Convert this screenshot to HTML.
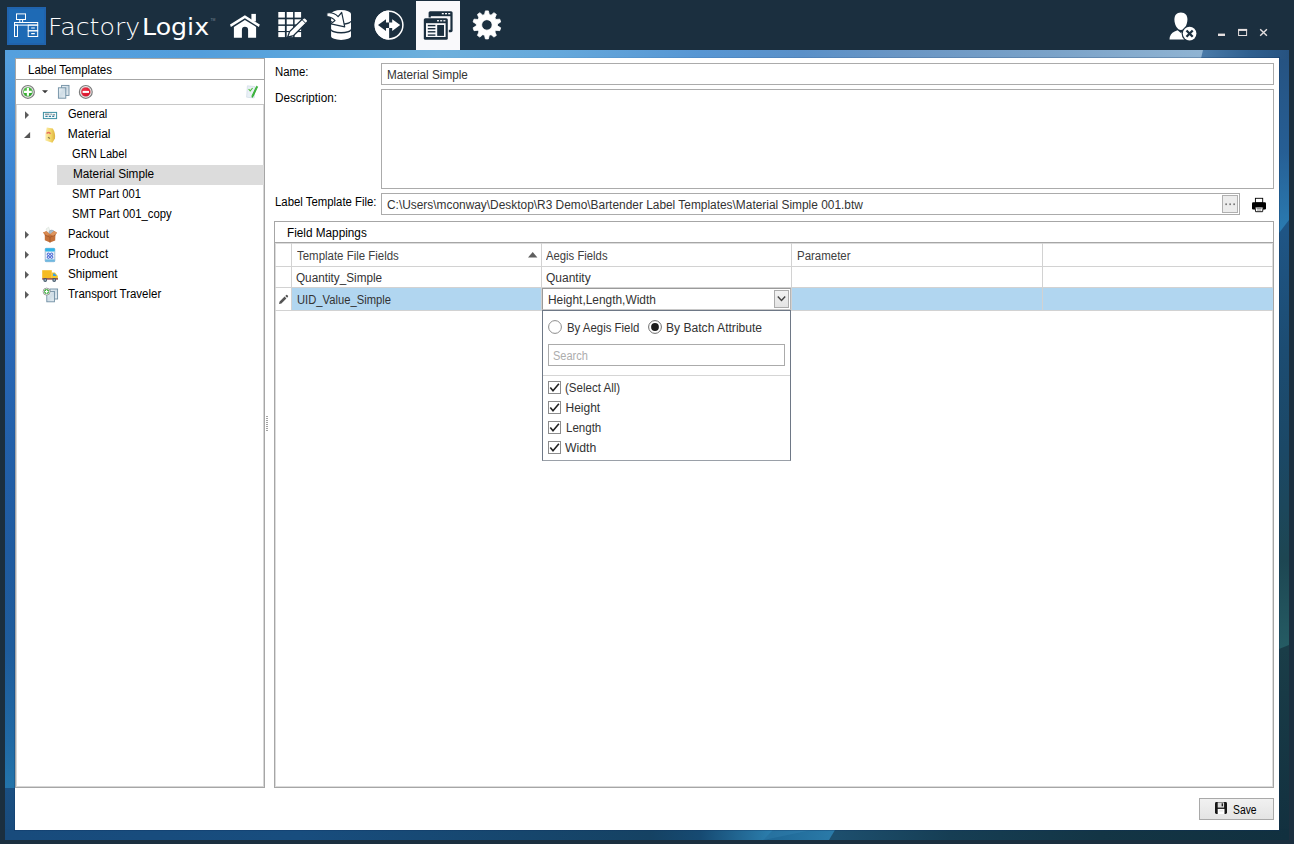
<!DOCTYPE html>
<html lang="en">
<head>
<meta charset="utf-8">
<title>FactoryLogix - Label Templates</title>
<style>
*{box-sizing:border-box;margin:0;padding:0}
html,body{width:1295px;height:844px;overflow:hidden;background:#1b2f3f}
body{position:relative;font-family:"Liberation Sans",sans-serif;font-size:12px;color:#000}
.abs{position:absolute}
#win{position:absolute;left:0;top:0;width:1295px;height:844px;background:#1b2f3f;overflow:hidden}
#edgecol{position:absolute;left:1294px;top:0;width:1px;height:844px;background:#fff}
#panel{position:absolute;left:15px;top:58px;width:1264px;height:772px;background:#fff}
.t{position:absolute;white-space:nowrap;line-height:14px;height:14px}
/* header */
#logo{position:absolute;left:7px;top:7px;width:39px;height:38px;background:#1e6ab5;border:2.5px solid #2063ad}
#tabsel{position:absolute;left:416px;top:1px;width:44px;height:49px;background:#f9f9fb}
.ln{position:absolute;background:#a6a6a6}
.box{position:absolute;border:1px solid #ababab;background:#fff}
.g{background:#d2d2d2}
.h{color:#404040}
.c{color:#333}
</style>
</head>
<body>
<div id="win">
  <svg id="bg" class="abs" style="left:5px;top:50px" width="1284" height="790" viewBox="5 50 1284 790">
    <defs>
      <linearGradient id="bT" gradientUnits="userSpaceOnUse" x1="5" y1="0" x2="1289" y2="0"><stop offset="0.0000" stop-color="#55a0de"/><stop offset="0.1519" stop-color="#539edc"/><stop offset="0.2531" stop-color="#5ea8dc"/><stop offset="0.3388" stop-color="#6eb0dc"/><stop offset="0.4322" stop-color="#65a8db"/><stop offset="0.5413" stop-color="#5796d3"/><stop offset="0.6192" stop-color="#5a90c8"/><stop offset="0.6970" stop-color="#6a96c4"/><stop offset="0.8139" stop-color="#7aa2c8"/><stop offset="0.9330" stop-color="#90b4d3"/><stop offset="0.9330" stop-color="#4a7aa8"/><stop offset="0.9696" stop-color="#2f5f8e"/><stop offset="1.0000" stop-color="#265280"/></linearGradient>
      <linearGradient id="bL" gradientUnits="userSpaceOnUse" x1="0" y1="50" x2="0" y2="840"><stop offset="0.0000" stop-color="#57a2e0"/><stop offset="0.1266" stop-color="#3f8ad6"/><stop offset="0.2532" stop-color="#2f74c6"/><stop offset="0.3797" stop-color="#2867b6"/><stop offset="0.4937" stop-color="#2260aa"/><stop offset="0.6329" stop-color="#1f5ba0"/><stop offset="0.7595" stop-color="#1e5c9c"/><stop offset="0.8734" stop-color="#2069a4"/><stop offset="0.9342" stop-color="#2374aa"/><stop offset="0.9342" stop-color="#1a4f82"/><stop offset="1.0000" stop-color="#184b7c"/></linearGradient>
      <linearGradient id="bR" gradientUnits="userSpaceOnUse" x1="0" y1="50" x2="0" y2="840"><stop offset="0.0000" stop-color="#265280"/><stop offset="0.1266" stop-color="#265e94"/><stop offset="0.2316" stop-color="#2a7cb2"/><stop offset="0.2316" stop-color="#1f5585"/><stop offset="0.3797" stop-color="#1c4c72"/><stop offset="0.5063" stop-color="#1b4866"/><stop offset="0.6456" stop-color="#1d4652"/><stop offset="0.7582" stop-color="#255c64"/><stop offset="0.7582" stop-color="#1a3d48"/><stop offset="1.0000" stop-color="#12303f"/></linearGradient>
      <linearGradient id="bB" gradientUnits="userSpaceOnUse" x1="5" y1="0" x2="1289" y2="0"><stop offset="0.0000" stop-color="#184b7c"/><stop offset="0.2298" stop-color="#184d7e"/><stop offset="0.5023" stop-color="#154263"/><stop offset="0.5413" stop-color="#164a72"/><stop offset="0.5981" stop-color="#2c7fae"/><stop offset="0.5981" stop-color="#1f6896"/><stop offset="0.6464" stop-color="#2b7ba9"/><stop offset="0.6464" stop-color="#1d4f6e"/><stop offset="0.7360" stop-color="#163e54"/><stop offset="0.8528" stop-color="#133545"/><stop offset="1.0000" stop-color="#11303f"/></linearGradient>
      <linearGradient id="oT" x1="0" y1="0" x2="1" y2="0"><stop offset="0.3" stop-color="#0c2f5c" stop-opacity="0"/><stop offset="1" stop-color="#0c2f5c" stop-opacity="0.3"/></linearGradient>
      <linearGradient id="oL" x1="0" y1="0" x2="0" y2="1"><stop offset="0.3" stop-color="#0c2f5c" stop-opacity="0"/><stop offset="1" stop-color="#0c2f5c" stop-opacity="0.3"/></linearGradient>
    </defs>
    <rect x="5" y="50" width="1284" height="790" fill="#1f5a9c"/>
    <rect x="5" y="58" width="12" height="774" fill="url(#bL)"/>
    <rect x="1277" y="58" width="12" height="774" fill="url(#bR)"/>
    <rect x="5" y="50" width="1284" height="9" fill="url(#bT)"/>
    <rect x="5" y="829" width="1284" height="11" fill="url(#bB)"/>
    <polygon points="1203,50 1203,59 1200.9,59" fill="#4a7aa8"/>
    <polygon points="1289,220 1289,233 1279,233" fill="#1f5585"/>
    <polygon points="1289,645 1289,649 1279,649" fill="#1a3d48"/>
    <polygon points="773,830 773,840 763.5,840" fill="#1f6896"/>
    <polygon points="773,830 812,830 763.5,840" fill="#3a8cb8" opacity="0.3"/>
    <polygon points="835,830 835,840 829,840" fill="#1d4f6e"/>
    <rect x="14" y="57" width="1266" height="1" fill="url(#oT)"/>
    <rect x="14" y="57" width="1" height="774" fill="url(#oL)"/>
    <rect x="1279" y="57" width="1" height="774" fill="#0c2f5c" fill-opacity="0.3"/>
    <rect x="14" y="830" width="1266" height="1" fill="#0c2f5c" fill-opacity="0.3"/>
  </svg>
  <div id="panel"></div>
  <div id="edgecol"></div>

  <!-- HEADER -->
  <div id="logo"></div>
  <div id="tabsel"></div>
  <div id="brand" class="abs" style="left:48px;top:10px;height:34px;line-height:34px;font-size:23.5px;color:#fff;white-space:nowrap;transform:scaleX(1.075);transform-origin:0 0"><span id="b1" style="font-family:'DejaVu Sans Light','DejaVu Sans',sans-serif;font-weight:200">Factory</span><span id="b2" style="font-family:'DejaVu Sans',sans-serif;font-weight:400;margin-left:1.6px">Logix</span></div>
  <div class="abs" style="left:210.5px;top:16.5px;font-size:3.4px;line-height:6px;color:#7d8a94;font-family:'Liberation Sans',sans-serif">TM</div>
  <svg id="hdr" class="abs" style="left:0;top:0" width="1295" height="50" viewBox="0 0 1295 50">
    <!-- desk logo -->
    <g fill="none" stroke="#fff" stroke-width="1">
      <rect x="16.5" y="13.9" width="9" height="5.6"/>
      <path d="M19.8 19.5 V22 M22.6 19.5 V22"/>
      <rect x="14.5" y="22.5" width="23.2" height="2.6"/>
      <rect x="14.5" y="25.1" width="3" height="11.4"/>
      <rect x="28.2" y="25.1" width="9.5" height="5.7"/>
      <rect x="28.2" y="30.8" width="9.5" height="5.7"/>
      <path d="M31.2 28 H34.8 M31.2 33.7 H34.8" stroke-width="1.2"/>
    </g>
    <!-- home -->
    <g fill="#fff">
      <path d="M244.9 15.2 L230 24.6 L230.9 27 L244.9 18.3 L258.9 27 L259.8 24.6 Z"/>
      <rect x="251.4" y="13.9" width="4.5" height="7.5"/>
      <path d="M244.9 20 L233.9 26.9 V37.8 H241.9 V30 Q241.9 26.8 244.9 26.8 Q248.1 26.8 248.1 30 V37.8 H256.1 V26.9 Z"/>
    </g>
    <!-- grid + pencil -->
    <g fill="#fff">
      <rect x="278.3" y="12" width="6.6" height="5.6"/><rect x="286.7" y="12" width="6.4" height="5.6"/><rect x="294.6" y="12" width="6.5" height="5.6"/>
      <rect x="278.3" y="19.3" width="6.6" height="5.1"/><rect x="286.7" y="19.3" width="6.4" height="5.1"/><rect x="294.6" y="19.3" width="6.5" height="5.1"/>
      <rect x="278.3" y="25.9" width="6.6" height="5.1"/><rect x="286.7" y="25.9" width="6.4" height="5.1"/><rect x="294.6" y="25.9" width="6.5" height="5.1"/>
      <rect x="278.3" y="32.1" width="6.6" height="5"/><rect x="286.7" y="32.1" width="6.4" height="5"/><rect x="294.6" y="32.1" width="6.5" height="5"/>
    </g>
    <path d="M287.6 37.2 L289.6 31.6 L303.2 18.2 Q304.4 17.2 305.6 18.3 L307.2 19.9 Q308.2 21.1 307.1 22.2 L293.4 35.6 Z" fill="#fff" stroke="#1b2f3f" stroke-width="1.3"/>
    <path d="M302 19.6 L305.8 23.4" stroke="#1b2f3f" stroke-width="1" fill="none"/>
    <!-- database -->
    <g fill="#fff">
      <path d="M331.1 13.6 A9.95 3.5 0 0 1 351 13.6 V20.2 A9.95 3.1 0 0 1 331.1 20.2 Z"/>
      <path d="M331.1 21.7 A9.95 3.1 0 0 0 351 21.7 V28.8 A9.95 3.1 0 0 1 331.1 28.8 Z"/>
      <path d="M331.1 30.4 A9.95 3.1 0 0 0 351 30.4 V36.4 A9.95 3.5 0 0 1 331.1 36.4 Z"/>
    </g>
    <path d="M326.8 13 Q333.6 11.8 338.1 16.7 L341.7 12.5 L344.7 26.9 L330.9 23.9 L335 20.5 Q332.6 17.4 326.9 16.6 Z" fill="#fff" stroke="#1b2f3f" stroke-width="1.2" stroke-linejoin="round"/>
    <!-- arrows circle -->
    <circle cx="389.1" cy="25.1" r="13.8" fill="none" stroke="#fff" stroke-width="1.5"/>
    <path d="M389.1 10.6 A14.5 14.5 0 0 0 389.1 39.6 Z" fill="#fff"/>
    <path d="M378 25.1 L386 19.3 V22.4 H389.1 V27.9 H386 V30.9 Z" fill="#1b2f3f"/>
    <path d="M400.2 25.1 L392.2 19.3 V22.4 H389.1 V27.9 H392.2 V30.9 Z" fill="#fff"/>
    <!-- windows (selected) -->
    <g>
      <rect x="428.6" y="11.2" width="24" height="21" rx="1.6" fill="#1b2f3f"/>
      <rect x="430.8" y="16.2" width="19.6" height="13.6" fill="#f9f9fb"/>
      <rect x="441.8" y="13" width="2" height="1.3" fill="#f9f9fb"/><rect x="445" y="13" width="2" height="1.3" fill="#f9f9fb"/><rect x="448.2" y="13" width="2" height="1.3" fill="#f9f9fb"/>
      <rect x="422.8" y="17.4" width="26" height="23.2" rx="2" fill="#f9f9fb"/>
      <rect x="423.8" y="18.2" width="24" height="21.6" rx="1.6" fill="#1b2f3f"/>
      <rect x="426" y="23.2" width="19.6" height="13.8" fill="#f9f9fb"/>
      <rect x="437" y="20.1" width="2" height="1.3" fill="#f9f9fb"/><rect x="440.2" y="20.1" width="2" height="1.3" fill="#f9f9fb"/><rect x="443.4" y="20.1" width="2" height="1.3" fill="#f9f9fb"/>
      <rect x="427.8" y="24.9" width="7.6" height="1.4" fill="#1b2f3f"/><rect x="427.8" y="28" width="7.6" height="1.4" fill="#1b2f3f"/><rect x="427.8" y="31.1" width="7.6" height="1.4" fill="#1b2f3f"/><rect x="427.8" y="34.4" width="7.6" height="1.4" fill="#1b2f3f"/>
      <rect x="437.2" y="25" width="6.8" height="10.9" fill="#1b2f3f"/>
    </g>
    <!-- gear -->
    <path d="M484.54 14.57 L485.42 10.88 L488.38 10.88 L489.26 14.57 L491.06 15.15 L493.95 12.69 L496.34 14.42 L494.89 17.93 L496.00 19.46 L499.78 19.16 L500.69 21.97 L497.46 23.96 L497.46 25.84 L500.69 27.83 L499.78 30.64 L496.00 30.34 L494.89 31.87 L496.34 35.38 L493.95 37.11 L491.06 34.65 L489.26 35.23 L488.38 38.92 L485.42 38.92 L484.54 35.23 L482.74 34.65 L479.85 37.11 L477.46 35.38 L478.91 31.87 L477.80 30.34 L474.02 30.64 L473.11 27.83 L476.34 25.84 L476.34 23.96 L473.11 21.97 L474.02 19.16 L477.80 19.46 L478.91 17.93 L477.46 14.42 L479.85 12.69 L482.74 15.15 Z M481.65 24.90 a5.25 5.25 0 1 0 10.50 0 a5.25 5.25 0 1 0 -10.50 0 Z" fill="#fff" fill-rule="evenodd" stroke="#fff" stroke-width="0.8" stroke-linejoin="round"/>
    <!-- user -->
    <path d="M1169.5 39.6 Q1169.8 33.4 1174.6 31.6 L1177.6 30.2 L1180.9 33 L1184.2 30.2 L1187.2 31.6 Q1190 33 1190 39.6 Z" fill="#fff"/>
    <path d="M1180.9 12.4 C1185.4 12.4 1187.4 15.6 1187.4 19.4 C1187.4 24.6 1184.4 30 1180.9 30 C1177.4 30 1174.4 24.6 1174.4 19.4 C1174.4 15.6 1176.4 12.4 1180.9 12.4 Z" fill="#fff"/>
    <circle cx="1189.6" cy="33.6" r="8" fill="#1b2f3f"/>
    <circle cx="1189.6" cy="33.6" r="6.8" fill="#fff"/>
    <path d="M1186.5 30.5 L1192.7 36.7 M1192.7 30.5 L1186.5 36.7" stroke="#1b2f3f" stroke-width="2.3" fill="none"/>
    <!-- window controls -->
    <rect x="1218" y="33.6" width="7" height="2.4" fill="#e6e0e0"/>
    <rect x="1238.6" y="29.9" width="8" height="5.6" fill="none" stroke="#e6e0e0" stroke-width="1"/>
    <rect x="1238.1" y="28.9" width="9" height="2" fill="#e6e0e0"/>
    <path d="M1260.2 29.3 L1266.9 35.8 M1266.9 29.3 L1260.2 35.8" stroke="#e6e0e0" stroke-width="1.4" fill="none"/>
  </svg>

  <!-- LEFT PANEL -->
  <div id="left" class="abs" style="left:15px;top:58px;width:250px;height:730px;border:1px solid #a6a6a6;background:#fff"></div>
  <div class="ln" style="left:16px;top:79px;width:248px;height:1px"></div>
  <div class="ln" style="left:16px;top:104px;width:248px;height:1px;background:#c8c8c8"></div>
  <div class="ln" style="left:16px;top:105px;width:1px;height:682px;background:#d6d6d6"></div>
  <div class="ln" style="left:263px;top:105px;width:1px;height:682px;background:#d6d6d6"></div>
  <div class="ln" style="left:16px;top:786px;width:248px;height:1px;background:#d6d6d6"></div>
  <div class="t" id="lt" style="left:27.6px;top:63px;transform:scaleX(0.9644);transform-origin:0 0">Label Templates</div>

  <div class="abs" style="left:57px;top:165px;width:207px;height:20px;background:#dcdcdc"></div>
  <div class="t tr" style="left:68.4px;top:107px;transform:scaleX(0.9209);transform-origin:0 0">General</div>
  <div class="t tr" style="left:67.8px;top:127px;transform:scaleX(1.0000);transform-origin:0 0">Material</div>
  <div class="t tr" style="left:72px;top:147px;transform:scaleX(0.9256);transform-origin:0 0">GRN Label</div>
  <div class="t tr" style="left:72.5px;top:167px;transform:scaleX(0.9807);transform-origin:0 0">Material Simple</div>
  <div class="t tr" style="left:72.3px;top:187px;transform:scaleX(0.9338);transform-origin:0 0">SMT Part 001</div>
  <div class="t tr" style="left:72.3px;top:207px;transform:scaleX(0.9421);transform-origin:0 0">SMT Part 001_copy</div>
  <div class="t tr" style="left:67.8px;top:227px;transform:scaleX(0.9405);transform-origin:0 0">Packout</div>
  <div class="t tr" style="left:67.8px;top:247px;transform:scaleX(0.9714);transform-origin:0 0">Product</div>
  <div class="t tr" style="left:68px;top:267px;transform:scaleX(0.9766);transform-origin:0 0">Shipment</div>
  <div class="t tr" style="left:68px;top:287px;transform:scaleX(0.9551);transform-origin:0 0">Transport Traveler</div>

  <svg id="lefticons" class="abs" style="left:0;top:80px" width="265" height="230" viewBox="0 80 265 230">
    <defs>
      <radialGradient id="gG" cx="0.4" cy="0.35" r="0.7"><stop offset="0" stop-color="#5ccf4c"/><stop offset="1" stop-color="#1d9a1d"/></radialGradient>
      <radialGradient id="gR" cx="0.4" cy="0.35" r="0.7"><stop offset="0" stop-color="#f4364a"/><stop offset="1" stop-color="#d20a24"/></radialGradient>
      <linearGradient id="gP" x1="0" y1="0" x2="1" y2="1"><stop offset="0" stop-color="#eef4f8"/><stop offset="0.5" stop-color="#cfdde6"/><stop offset="1" stop-color="#e6eef3"/></linearGradient>
      <linearGradient id="gB" x1="0" y1="0" x2="1" y2="0"><stop offset="0" stop-color="#faecae"/><stop offset="0.55" stop-color="#f4d869"/><stop offset="1" stop-color="#dcb03c"/></linearGradient>
    </defs>
    <!-- add -->
    <circle cx="27.9" cy="91.9" r="6.4" fill="#f4f4f4" stroke="#7c7c7c" stroke-width="1.2"/>
    <circle cx="27.9" cy="91.9" r="4.7" fill="url(#gG)" stroke="#9ab89a" stroke-width="0.5"/>
    <path d="M27.9 88 V95.8 M24 91.9 H31.8" stroke="#fff" stroke-width="2.1"/>
    <path d="M42 90.2 H48 L45 93.2 Z" fill="#3a3a3a"/>
    <!-- copy -->
    <rect x="61.6" y="85.4" width="7.4" height="10" fill="url(#gP)" stroke="#6f8ea3" stroke-width="0.9"/>
    <rect x="58.4" y="87.8" width="7.4" height="10.4" fill="url(#gP)" stroke="#6f8ea3" stroke-width="0.9"/>
    <!-- delete -->
    <circle cx="85.8" cy="91.9" r="6.4" fill="#f4f4f4" stroke="#7c7c7c" stroke-width="1.2"/>
    <circle cx="85.8" cy="91.9" r="4.7" fill="url(#gR)" stroke="#c09a9a" stroke-width="0.5"/>
    <rect x="82.6" y="90.9" width="6.4" height="2" fill="#fff"/>
    <!-- edit (note + pencil) -->
    <path d="M247.4 85.8 L255 86.6 L254.2 98 L246.6 97.2 Z" fill="#e9f0f6" stroke="#c9d6e2" stroke-width="0.6"/>
    <path d="M248.6 89 L250.2 90.8 L252.6 88" stroke="#4fbf3a" stroke-width="1.1" fill="none"/>
    <path d="M256.6 86.2 L257.6 86.8 L253.2 96.4 L252 97.4 L252 95.8 Z" fill="#3cc43c" stroke="#2ea42e" stroke-width="0.8"/>
    <!-- arrows -->
    <path d="M25 111.2 V119.0 L29 115.1 Z" fill="#5c5c5c"/>
    <path d="M24 138 H30.1 V132 Z" fill="#555"/>
    <path d="M25 230.9 V238.7 L29 234.8 Z" fill="#5c5c5c"/><path d="M25 250.9 V258.7 L29 254.8 Z" fill="#5c5c5c"/><path d="M25 270.9 V278.7 L29 274.8 Z" fill="#5c5c5c"/><path d="M25 290.9 V298.7 L29 294.8 Z" fill="#5c5c5c"/>
    <!-- general -->
    <rect x="43.4" y="112.4" width="13.2" height="6.2" fill="#f4fafb" stroke="#3d8fa2" stroke-width="1"/>
    <path d="M45 114.2 H49.4 M50.4 114.2 H51.8 M52.6 114.8 H55" stroke="#5a6a72" stroke-width="0.9"/>
    <path d="M45.4 116.4 H47.6 M48.8 116.4 H51 M52.2 116.4 H54.2" stroke="#2f7fa0" stroke-width="1.1"/>
    <!-- material bag -->
    <path d="M46.8 127.4 L52.8 128.6 Q55.6 133 55 138.4 L52.4 142.8 L45.4 140.4 Q44.6 134 46.8 127.4 Z" fill="url(#gB)"/>
    <path d="M46.6 133.4 Q48.6 131.6 50.6 133.8" stroke="#e8705a" stroke-width="1.4" fill="none"/>
    <path d="M48 137.2 L50 138.4" stroke="#8a7a50" stroke-width="1.2"/>
    <!-- packout box -->
    <path d="M46 229 L48.6 227.2 L50.4 231.6 L47.6 232.6 Z" fill="#f1f4f1" stroke="#c7d3c7" stroke-width="0.4"/>
    <ellipse cx="51.6" cy="232.4" rx="2.6" ry="2.3" fill="#a9bccb" stroke="#8399aa" stroke-width="0.5"/>
    <path d="M43 232.6 L46.4 231.2 L50 234.2 L54.2 231 L57 232.8 L55.4 235 L55.2 240.4 L50 242.6 L44.8 240.2 L44.8 235 Z" fill="#c4713a"/>
    <path d="M44.8 235 L50 237.2 L55.4 235 M50 237.2 V242.6" stroke="#9c5526" stroke-width="0.7" fill="none"/>
    <path d="M43 232.6 L46.4 231.2 L50 234.2 L47 235.6 Z" fill="#d88a52"/>
    <path d="M57 232.8 L54.2 231 L50 234.2 L53.2 235.8 Z" fill="#dd9660"/>
    <!-- product -->
    <rect x="45.2" y="248.3" width="9.6" height="13.4" rx="0.8" fill="#e9eef7" stroke="#7fa3c8" stroke-width="0.7"/>
    <rect x="45.2" y="248.3" width="9.6" height="3.2" rx="0.8" fill="#2fb4e6"/>
    <rect x="45.2" y="259.4" width="9.6" height="2.3" fill="#6db8e0"/>
    <g fill="none" stroke="#2a4fd0" stroke-width="0.9"><circle cx="48.4" cy="254.3" r="1.2"/><circle cx="51.6" cy="254.3" r="1.2"/><circle cx="48.4" cy="257.2" r="1.2"/><circle cx="51.6" cy="257.2" r="1.2"/></g>
    <!-- shipment truck -->
    <rect x="42.2" y="270.2" width="9.6" height="8" fill="#f6bb22"/>
    <path d="M51.8 272.6 H55 L57.8 276 V278.6 H51.8 Z" fill="#f3c62c"/>
    <path d="M53 273.6 H54.8 L56.6 276 H53 Z" fill="#3aa0e8"/>
    <rect x="42.2" y="278.2" width="15.8" height="1.4" fill="#8c3a2c"/>
    <circle cx="45.2" cy="280" r="1.9" fill="#44586a"/><circle cx="54.2" cy="280" r="1.9" fill="#44586a"/>
    <circle cx="45.2" cy="280" r="0.8" fill="#c6d2dc"/><circle cx="54.2" cy="280" r="0.8" fill="#c6d2dc"/>
    <!-- transport traveler -->
    <rect x="50" y="289" width="7.6" height="10" fill="url(#gP)" stroke="#6f8ea3" stroke-width="0.9"/>
    <rect x="46.8" y="291.4" width="7.6" height="10.4" fill="url(#gP)" stroke="#6f8ea3" stroke-width="0.9"/>
    <circle cx="46.6" cy="291.6" r="3.5" fill="#fff" stroke="#8a8a8a" stroke-width="0.8"/>
    <circle cx="46.6" cy="291.6" r="2.5" fill="#35a935"/>
    <path d="M46.6 289.8 V293.4 M44.8 291.6 H48.4" stroke="#fff" stroke-width="1.1"/>
  </svg>

  <svg class="abs" style="left:266px;top:416px" width="2" height="16" viewBox="0 0 2 16"><rect x="0" y="0" width="2" height="1" fill="#a2a2a2"/><rect x="0" y="2" width="2" height="1" fill="#a2a2a2"/><rect x="0" y="4" width="2" height="1" fill="#a2a2a2"/><rect x="0" y="6" width="2" height="1" fill="#a2a2a2"/><rect x="0" y="8" width="2" height="1" fill="#a2a2a2"/><rect x="0" y="10" width="2" height="1" fill="#a2a2a2"/><rect x="0" y="12" width="2" height="1" fill="#a2a2a2"/><rect x="0" y="14" width="2" height="1" fill="#a2a2a2"/></svg>
  <!-- RIGHT FORM -->
  <div class="t" style="left:274.9px;top:65px;transform:scaleX(0.9486);transform-origin:0 0">Name:</div>
  <div class="t" style="left:274.9px;top:91px;transform:scaleX(0.9778);transform-origin:0 0">Description:</div>
  <div class="t" style="left:274.6px;top:195px;transform:scaleX(0.9472);transform-origin:0 0">Label Template File:</div>
  <div class="box" style="left:381px;top:63px;width:893px;height:22px"></div>
  <div class="t c" style="left:387.1px;top:68px;transform:scaleX(0.9771);transform-origin:0 0">Material Simple</div>
  <div class="box" style="left:381px;top:89px;width:893px;height:100px"></div>
  <div class="box" style="left:381px;top:193px;width:859px;height:22px"></div>
  <div class="box" style="left:1222px;top:195px;width:16px;height:18px;border-color:#b0b0b0;background:#ececec"></div>
  <svg class="abs" style="left:1225px;top:203px" width="11" height="3" viewBox="0 0 11 3"><rect x="0.3" y="0.4" width="1.7" height="1.7" fill="#7a7a7a"/><rect x="4.3" y="0.4" width="1.7" height="1.7" fill="#7a7a7a"/><rect x="8.3" y="0.4" width="1.7" height="1.7" fill="#7a7a7a"/></svg>
  <svg class="abs" style="left:1251px;top:197px" width="16" height="16" viewBox="1251 197 16 16"><rect x="1255.4" y="198.3" width="7.3" height="4.6" fill="#fff" stroke="#000" stroke-width="0.9"/><path d="M1252 203.4 Q1252 202.2 1253.2 202.2 H1264.8 Q1266 202.2 1266 203.4 V208.6 Q1266 209.4 1265.2 209.4 H1252.8 Q1252 209.4 1252 208.6 Z" fill="#000"/><path d="M1255 207 H1263.2 L1262.6 211.7 H1255.6 Z" fill="#fff" stroke="#000" stroke-width="0.9"/><path d="M1256.6 208.4 H1261.6 M1257 210 H1261.2" stroke="#8a8a8a" stroke-width="1"/></svg>
  <div class="t c" style="left:387.2px;top:198px;transform:scaleX(0.9913);transform-origin:0 0">C:\Users\mconway\Desktop\R3 Demo\Bartender Label Templates\Material Simple 001.btw</div>

  <!-- FIELD MAPPINGS -->
  <div class="box" style="left:274px;top:221px;width:1000px;height:567px;border-color:#a6a6a6"></div>
  <div class="ln" style="left:275px;top:242px;width:998px;height:1px"></div>
  <div class="ln" style="left:275px;top:243px;width:998px;height:1px;background:#dcdcdc"></div>
  <div class="ln" style="left:275px;top:243px;width:1px;height:544px;background:#dcdcdc"></div>
  <div class="ln" style="left:1272px;top:243px;width:1px;height:544px;background:#dcdcdc"></div>
  <div class="ln" style="left:275px;top:786px;width:998px;height:1px;background:#dcdcdc"></div>
  <div class="t" style="left:286.8px;top:226px;transform:scaleX(0.9803);transform-origin:0 0">Field Mappings</div>

  <div class="abs" style="left:292px;top:288px;width:981px;height:22px;background:#b1d6f0"></div>
  <!-- grid lines -->
  <div class="ln g" style="left:275px;top:266px;width:998px;height:1px"></div>
  <div class="ln g" style="left:275px;top:287px;width:998px;height:1px"></div>
  <div class="ln g" style="left:275px;top:310px;width:998px;height:1px"></div>
  <div class="ln g" style="left:291px;top:243px;width:1px;height:67px"></div>
  <div class="ln g" style="left:541px;top:243px;width:1px;height:67px"></div>
  <div class="ln g" style="left:791px;top:243px;width:1px;height:67px"></div>
  <div class="ln g" style="left:1042px;top:243px;width:1px;height:67px"></div>
  <svg class="abs" style="left:528px;top:252px" width="10" height="6" viewBox="0 0 10 6"><path d="M0 5.5 L4.7 0 L9.4 5.5 Z" fill="#5f5f5f"/></svg>
  <svg class="abs" style="left:278px;top:294px" width="11" height="11" viewBox="0 0 11 11"><path d="M1 10 L1.6 7.6 L6.6 2.6 L8.4 4.4 L3.4 9.4 Z M7.3 1.9 L8.2 1 Q8.8 0.6 9.4 1.2 L9.8 1.6 Q10.4 2.2 10 2.8 L9.1 3.7 Z" fill="#555"/></svg>
  <div class="t h" style="left:296.5px;top:249px;transform:scaleX(0.9542);transform-origin:0 0">Template File Fields</div>
  <div class="t h" style="left:546px;top:249px;transform:scaleX(0.9418);transform-origin:0 0">Aegis Fields</div>
  <div class="t h" style="left:796.6px;top:249px;transform:scaleX(0.9554);transform-origin:0 0">Parameter</div>
  <div class="t c" style="left:296px;top:271px;transform:scaleX(0.9773);transform-origin:0 0">Quantity_Simple</div>
  <div class="t c" style="left:546px;top:271px;transform:scaleX(1.0000);transform-origin:0 0">Quantity</div>
  <div class="t c" style="left:296.5px;top:293px;transform:scaleX(0.9360);transform-origin:0 0">UID_Value_Simple</div>

  <!-- DROPDOWN -->
  <div class="box" style="left:542px;top:288px;width:249px;height:22px;border-color:#9a9a9a #b5b5b5 #c8c8c8 #9a9a9a"></div>
  <div class="box" style="left:774px;top:290px;width:15px;height:18px;border-color:#acacac;background:linear-gradient(#f2f2f2,#e4e4e4)"></div>
  <svg class="abs" style="left:777px;top:295px" width="9" height="8" viewBox="0 0 9 8"><path d="M0.8 1.5 L4.5 5.5 L8.2 1.5" fill="none" stroke="#444" stroke-width="1.4"/></svg>
  <div class="t c" style="left:548px;top:293px;transform:scaleX(0.9917);transform-origin:0 0">Height,Length,Width</div>
  <div class="box" style="left:542px;top:310px;width:249px;height:151px;border-color:#6e7886 #6e7886 #9aa0a8 #6e7886"></div>
  <svg class="abs" style="left:548px;top:320px" width="14" height="14" viewBox="0 0 14 14"><circle cx="7" cy="7" r="6.4" fill="#fff" stroke="#8c8c8c" stroke-width="1"/></svg>
  <svg class="abs" style="left:648px;top:320px" width="14" height="14" viewBox="0 0 14 14"><circle cx="7" cy="7" r="6.4" fill="#fff" stroke="#6c6c6c" stroke-width="1"/><circle cx="7" cy="7" r="3.9" fill="#1c1c1c"/></svg>
  <div class="t c" style="left:566.6px;top:321px;transform:scaleX(0.9513);transform-origin:0 0">By Aegis Field</div>
  <div class="t c" style="left:665.8px;top:321px;transform:scaleX(1.0074);transform-origin:0 0">By Batch Attribute</div>
  <div class="box" style="left:548px;top:344px;width:237px;height:22px"></div>
  <div class="t" style="left:553px;top:349px;color:#adadad;transform:scaleX(0.9184);transform-origin:0 0">Search</div>
  <div class="ln" style="left:543px;top:375px;width:247px;height:1px;background:#d5d5d5"></div>
  <svg class="abs" style="left:548px;top:381px" width="13" height="13" viewBox="0 0 13 13"><rect x="0.5" y="0.5" width="12" height="12" fill="#fff" stroke="#8c8c8c"/><path d="M2.3 6.5 L5 9.8 L10.9 2.7" fill="none" stroke="#222" stroke-width="1.6"/></svg>
  <svg class="abs" style="left:548px;top:401px" width="13" height="13" viewBox="0 0 13 13"><rect x="0.5" y="0.5" width="12" height="12" fill="#fff" stroke="#8c8c8c"/><path d="M2.3 6.5 L5 9.8 L10.9 2.7" fill="none" stroke="#222" stroke-width="1.6"/></svg>
  <svg class="abs" style="left:548px;top:421px" width="13" height="13" viewBox="0 0 13 13"><rect x="0.5" y="0.5" width="12" height="12" fill="#fff" stroke="#8c8c8c"/><path d="M2.3 6.5 L5 9.8 L10.9 2.7" fill="none" stroke="#222" stroke-width="1.6"/></svg>
  <svg class="abs" style="left:548px;top:441px" width="13" height="13" viewBox="0 0 13 13"><rect x="0.5" y="0.5" width="12" height="12" fill="#fff" stroke="#8c8c8c"/><path d="M2.3 6.5 L5 9.8 L10.9 2.7" fill="none" stroke="#222" stroke-width="1.6"/></svg>
  <div class="t c" style="left:565px;top:381px;transform:scaleX(0.9614);transform-origin:0 0">(Select All)</div>
  <div class="t c" style="left:565.5px;top:401px;transform:scaleX(1.0000);transform-origin:0 0">Height</div>
  <div class="t c" style="left:565.5px;top:421px;transform:scaleX(0.9615);transform-origin:0 0">Length</div>
  <div class="t c" style="left:565px;top:441px;transform:scaleX(1.0205);transform-origin:0 0">Width</div>

  <!-- SAVE -->
  <div class="box" style="left:1199px;top:798px;width:75px;height:22px;border-color:#a9a9a9;background:linear-gradient(#f1f1f1,#e4e4e4)"></div>
  <svg class="abs" style="left:1215px;top:802px" width="12" height="12" viewBox="0 0 12 12"><rect x="0" y="0" width="12" height="12" rx="1.4" fill="#161616"/><rect x="2.7" y="0.4" width="6.4" height="5.2" fill="#d9d9d9"/><rect x="6.6" y="1.3" width="1.4" height="3" fill="#222"/><rect x="2.7" y="6.9" width="6.8" height="5.1" fill="#fff"/><rect x="4" y="8.6" width="4.2" height="0.7" fill="#d0d0d0"/></svg>
  <div class="t" style="left:1233.3px;top:803px;transform:scaleX(0.8607);transform-origin:0 0">Save</div>
</div>
</body>
</html>
